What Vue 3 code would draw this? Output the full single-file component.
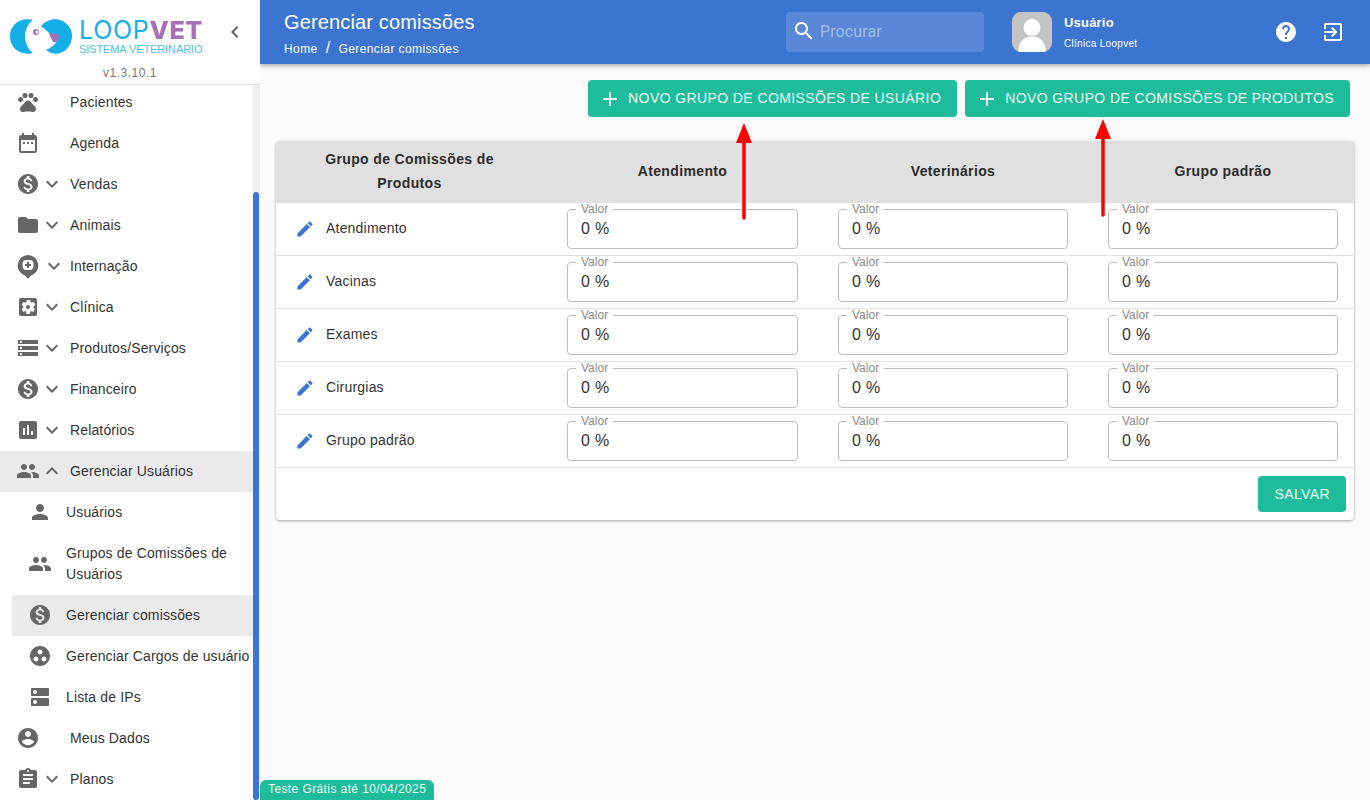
<template>
  <div class="app">
    <aside class="sidebar">
      <div class="brand">
        <div class="brand-row">
          <svg class="logo-mark" width="66" height="40" viewBox="10 17 66 40">
            <path d="M33 20C20 17 10 25 10 36.500S20 56 33 53C29 50 25 44 25 36.500S29 23 33 20Z" fill="#14aee8" />
            <path d="M41 26C46 20 54 18 60 20C68 23 72 29 72 36C72 44 67 51 60 53C55 55 50 53 46 50C51 48 55 45 57 41C54 37 50 34 47 31C45 29 43 28 41 26Z" fill="#14aee8" />
            <path d="M49 34Q55 32 59 35L58 41Q55 43 53 42Q51 38 49 34Z" fill="#a46fb5" />
            <circle cx="36" cy="32" r="3" fill="#a46fb5" />
            <circle cx="37" cy="32" r="1.500" fill="#fff" />
          </svg>
          <div class="wordmark">
            <div class="wordmark-name"><span>LOOP</span><b>VET</b></div>
            <div class="wordmark-sub">SISTEMA VETERINÁRIO</div>
          </div>
          <svg class="collapse" width="24" height="24" viewBox="0 0 24 24"><path :d="icons.chevronLeft" /></svg>
        </div>
        <div class="version">v1.3.10.1</div>
      </div>

      <div class="nav-wrap">
        <ul class="nav">
          <li
            v-for="item in menu"
            :key="item.label"
            class="nav-item"
            :class="{ sub: item.sub, active: item.active, tall: item.tall, open: item.open }"
          >
            <svg class="nav-icon" width="24" height="24" viewBox="0 0 24 24">
              <template v-if="item.icon === 'pets'">
                <circle cx="4.500" cy="9.500" r="2.500" />
                <circle cx="9" cy="5.500" r="2.500" />
                <circle cx="15" cy="5.500" r="2.500" />
                <circle cx="19.500" cy="9.500" r="2.500" />
              </template>
              <template v-if="item.icon === 'pin'">
                <path d="M12 1a10.500 10.500 0 0 0-3 20.500L12 25l3-3.500A10.500 10.500 0 0 0 12 1Z" />
                <rect x="6.500" y="6" width="11" height="10" rx="4" fill="#fff" />
                <path d="M11 8h2v2h2v2h-2v2h-2v-2H9v-2h2Z" />
              </template>
              <path v-else :d="icons[item.icon]" />
            </svg>
            <span v-if="!item.sub" class="chevron-slot" :class="{ shifted: item.icon === 'pin' }">
              <svg v-if="item.chevron" width="24" height="24" viewBox="0 0 24 24">
                <path :d="item.open ? icons.expandLess : icons.expandMore" />
              </svg>
            </span>
            <span class="nav-label">{{ item.label }}</span>
          </li>
        </ul>
        <div class="scroll-thumb"></div>
      </div>
    </aside>

    <div class="main">
      <header class="topbar">
        <div class="page-title">
          <h1>Gerenciar comissões</h1>
          <div class="crumbs">
            <span>Home</span>
            <span class="crumb-sep">/</span>
            <span>Gerenciar comissões</span>
          </div>
        </div>
        <div class="search">
          <svg width="24" height="24" viewBox="0 0 24 24" fill="#fff"><path :d="icons.search" /></svg>
          <span>Procurar</span>
        </div>
        <div class="user">
          <div class="avatar">
            <svg width="40" height="40" viewBox="0 0 40 40" fill="#fff">
              <circle cx="20" cy="15.500" r="8.500" />
              <path d="M6 40C6.500 30 12 24.500 20 24.500S33.500 30 34 40Z" />
            </svg>
          </div>
          <div class="user-text">
            <strong>Usuário</strong>
            <small>Clínica Loopvet</small>
          </div>
        </div>
        <svg class="top-icon help" width="24" height="24" viewBox="0 0 24 24"><path :d="icons.help" /></svg>
        <svg class="top-icon" width="24" height="24" viewBox="0 0 24 24"><path :d="icons.exit" /></svg>
      </header>

      <div class="actions">
        <button class="btn btn-icon">
          <svg width="24" height="24" viewBox="0 0 24 24"><path :d="icons.add" /></svg>
          NOVO GRUPO DE COMISSÕES DE USUÁRIO
        </button>
        <button class="btn btn-icon">
          <svg width="24" height="24" viewBox="0 0 24 24"><path :d="icons.add" /></svg>
          NOVO GRUPO DE COMISSÕES DE PRODUTOS
        </button>
      </div>

      <section class="card">
        <table>
          <colgroup>
            <col class="col-name" />
            <col class="col-a" />
            <col class="col-b" />
            <col class="col-b" />
          </colgroup>
          <thead>
            <tr>
              <th class="th-name">Grupo de Comissões de Produtos</th>
              <th>Atendimento</th>
              <th>Veterinários</th>
              <th>Grupo padrão</th>
            </tr>
          </thead>
          <tbody>
            <tr v-for="row in rows" :key="row">
              <td>
                <div class="row-name">
                  <svg width="24" height="24" viewBox="0 0 24 24" fill="#3b74d1"><path :d="icons.edit" /></svg>
                  <span>{{ row }}</span>
                </div>
              </td>
              <td v-for="n in 3" :key="n" class="td-field">
                <div class="field">
                  <label>Valor</label>
                  <span>0 %</span>
                </div>
              </td>
            </tr>
          </tbody>
        </table>
        <div class="card-foot">
          <button class="btn">SALVAR</button>
        </div>
      </section>
    </div>

    <!-- setas de anotacao por cima da tela -->
    <svg class="arrow arrow-1" width="18" height="97" viewBox="0 0 18 97">
      <path d="M9 18V95" stroke="#f00" stroke-width="3.500" stroke-linecap="round" />
      <path d="M9 0L17 20H1Z" fill="#f00" />
    </svg>
    <svg class="arrow arrow-2" width="18" height="98" viewBox="0 0 18 98">
      <path d="M9 18V96" stroke="#f00" stroke-width="3.500" stroke-linecap="round" />
      <path d="M9 0L17 20H1Z" fill="#f00" />
    </svg>

    <div class="trial">Teste Grátis até 10/04/2025</div>
  </div>
</template>

<script setup>
const icons = {
  pets: 'M17.34 14.86c-.87-1.02-1.6-1.89-2.48-2.91-.46-.54-1.05-1.08-1.75-1.32-.11-.04-.22-.07-.33-.09-.25-.04-.52-.04-.78-.04s-.53 0-.79.05c-.11.02-.22.05-.33.09-.7.24-1.28.78-1.75 1.32-.87 1.02-1.6 1.89-2.48 2.91-1.31 1.31-2.92 2.76-2.62 4.79.29 1.02 1.02 2.03 2.33 2.32.73.15 3.06-.44 5.54-.44h.18c2.48 0 4.81.58 5.54.44 1.31-.29 2.04-1.31 2.33-2.32.31-2.04-1.3-3.49-2.61-4.8z',
  date: 'M9 11H7v2h2v-2zm4 0h-2v2h2v-2zm4 0h-2v2h2v-2zm2-7h-1V2h-2v2H8V2H6v2H5c-1.11 0-1.99.9-1.99 2L3 20c0 1.1.89 2 2 2h14c1.1 0 2-.9 2-2V6c0-1.1-.9-2-2-2zm0 16H5V9h14v11z',
  money: 'M12 2C6.48 2 2 6.48 2 12s4.48 10 10 10 10-4.48 10-10S17.52 2 12 2zm1.41 16.09V20h-2.67v-1.93c-1.71-.36-3.16-1.46-3.27-3.4h1.96c.1 1.05.82 1.87 2.65 1.87 1.96 0 2.4-.98 2.4-1.59 0-.83-.44-1.61-2.67-2.14-2.48-.6-4.18-1.62-4.18-3.67 0-1.72 1.39-2.84 3.11-3.21V4h2.67v1.95c1.86.45 2.79 1.86 2.85 3.39H14.3c-.05-1.11-.64-1.87-2.22-1.87-1.5 0-2.4.68-2.4 1.64 0 .84.65 1.39 2.67 1.91s4.18 1.39 4.18 3.91c-.01 1.83-1.38 2.83-3.12 3.16z',
  folder: 'M10 4H4c-1.1 0-1.99.9-1.99 2L2 18c0 1.1.9 2 2 2h16c1.1 0 2-.9 2-2V8c0-1.1-.9-2-2-2h-8l-2-2z',
  settings: 'M12 10c-1.1 0-2 .9-2 2s.9 2 2 2 2-.9 2-2-.9-2-2-2zm7-7H5c-1.11 0-2 .9-2 2v14c0 1.1.89 2 2 2h14c1.11 0 2-.9 2-2V5c0-1.1-.89-2-2-2zm-1.75 9c0 .23-.02.46-.05.68l1.48 1.16c.13.11.17.3.08.45l-1.4 2.42c-.09.15-.27.21-.43.15l-1.74-.7c-.36.28-.76.51-1.18.69l-.26 1.85c-.03.17-.18.3-.35.3h-2.8c-.17 0-.32-.13-.35-.3L10.5 16.8c-.43-.18-.82-.41-1.18-.69l-1.74.7c-.16.06-.34 0-.43-.15l-1.4-2.42c-.09-.15-.05-.34.08-.45l1.48-1.16c-.03-.22-.05-.45-.05-.68 0-.23.02-.46.05-.68l-1.48-1.16c-.13-.11-.17-.3-.08-.45l1.4-2.42c.09-.15.27-.21.43-.15l1.74.7c.36-.28.76-.51 1.18-.69l.26-1.85c.03-.17.18-.3.35-.3h2.8c.17 0 .32.13.35.3l.26 1.85c.43.18.82.41 1.18.69l1.74-.7c.16-.06.34 0 .43.15l1.4 2.42c.09.15.05.34-.08.45l-1.48 1.16c.03.22.05.45.05.68z',
  storage: 'M2 20h20v-4H2v4zm2-3h2v2H4v-2zM2 4v4h20V4H2zm4 3H4V5h2v2zm-4 7h20v-4H2v4zm2-3h2v2H4v-2z',
  chart: 'M19 3H5c-1.1 0-2 .9-2 2v14c0 1.1.9 2 2 2h14c1.1 0 2-.9 2-2V5c0-1.1-.9-2-2-2zM9 17H7v-7h2v7zm4 0h-2V7h2v10zm4 0h-2v-4h2v4z',
  people: 'M16 11c1.66 0 2.99-1.34 2.99-3S17.66 5 16 5c-1.66 0-3 1.34-3 3s1.34 3 3 3zm-8 0c1.66 0 2.99-1.34 2.99-3S9.66 5 8 5C6.34 5 5 6.34 5 8s1.34 3 3 3zm0 2c-2.33 0-7 1.17-7 3.500V19h14v-2.500c0-2.330-4.670-3.500-7-3.500zm8 0c-.29 0-.62.02-.97.05 1.16.84 1.97 1.970 1.970 3.450V19h6v-2.500c0-2.330-4.670-3.500-7-3.500z',
  person: 'M12 12c2.210 0 4-1.790 4-4s-1.790-4-4-4-4 1.790-4 4 1.790 4 4 4zm0 2c-2.670 0-8 1.340-8 4v2h16v-2c0-2.660-5.330-4-8-4z',
  group: 'M12 2C6.480 2 2 6.480 2 12s4.480 10 10 10 10-4.480 10-10S17.520 2 12 2zM8 17.500c-1.380 0-2.500-1.120-2.500-2.500s1.120-2.500 2.500-2.500 2.500 1.120 2.500 2.500-1.120 2.500-2.500 2.500zM9.500 8c0-1.380 1.120-2.500 2.500-2.500s2.500 1.120 2.500 2.500-1.120 2.500-2.500 2.500S9.500 9.380 9.500 8zm6.500 9.500c-1.380 0-2.500-1.120-2.500-2.500s1.120-2.500 2.500-2.500 2.500 1.120 2.500 2.500-1.120 2.500-2.500 2.500z',
  dns: 'M20 13H4c-.55 0-1 .45-1 1v6c0 .55.45 1 1 1h16c.55 0 1-.45 1-1v-6c0-.55-.45-1-1-1zM7 19c-1.100 0-2-.9-2-2s.9-2 2-2 2 .9 2 2-.9 2-2 2zM20 3H4c-.55 0-1 .45-1 1v6c0 .55.45 1 1 1h16c.55 0 1-.45 1-1V4c0-.55-.45-1-1-1zM7 9c-1.100 0-2-.9-2-2s.9-2 2-2 2 .9 2 2-.9 2-2 2z',
  account: 'M12 2C6.480 2 2 6.480 2 12s4.480 10 10 10 10-4.480 10-10S17.520 2 12 2zm0 3c1.660 0 3 1.340 3 3s-1.340 3-3 3-3-1.340-3-3 1.340-3 3-3zm0 14.200c-2.500 0-4.710-1.280-6-3.220.03-1.990 4-3.080 6-3.080 1.990 0 5.970 1.090 6 3.080-1.290 1.940-3.500 3.220-6 3.220z',
  assignment: 'M19 3h-4.180C14.400 1.840 13.300 1 12 1c-1.300 0-2.400.84-2.820 2H5c-1.100 0-2 .9-2 2v14c0 1.100.9 2 2 2h14c1.100 0 2-.9 2-2V5c0-1.100-.9-2-2-2zm-7 0c.55 0 1 .45 1 1s-.45 1-1 1-1-.45-1-1 .45-1 1-1zm2 14H7v-2h7v2zm3-4H7v-2h10v2zm0-4H7V7h10v2z',
  expandMore: 'M16.590 8.590L12 13.170 7.410 8.590 6 10l6 6 6-6z',
  expandLess: 'M12 8l-6 6 1.410 1.410L12 10.830l4.590 4.580L18 14z',
  chevronLeft: 'M15.410 7.410L14 6l-6 6 6 6 1.410-1.410L10.830 12z',
  edit: 'M3 17.250V21h3.750L17.810 9.940l-3.750-3.750L3 17.250zM20.710 7.040c.39-.39.39-1.020 0-1.410l-2.340-2.340c-.39-.39-1.020-.39-1.410 0l-1.830 1.830 3.750 3.750 1.830-1.830z',
  search: 'M15.500 14h-.79l-.28-.27C15.410 12.590 16 11.110 16 9.500 16 5.910 13.090 3 9.500 3S3 5.910 3 9.500 5.910 16 9.500 16c1.610 0 3.090-.59 4.230-1.570l.27.28v.79l5 4.990L20.490 19l-4.990-5zm-6 0C7.010 14 5 11.990 5 9.500S7.010 5 9.500 5 14 7.010 14 9.500 11.990 14 9.500 14z',
  help: 'M12 2C6.480 2 2 6.480 2 12s4.480 10 10 10 10-4.480 10-10S17.520 2 12 2zm1 17h-2v-2h2v2zm2.070-7.750l-.9.92C13.450 12.900 13 13.500 13 15h-2v-.5c0-1.100.45-2.100 1.170-2.830l1.240-1.260c.37-.36.59-.86.59-1.410 0-1.100-.9-2-2-2s-2 .9-2 2H8c0-2.210 1.790-4 4-4s4 1.790 4 4c0 .88-.36 1.680-.93 2.250z',
  exit: 'M10.090 15.590L11.500 17l5-5-5-5-1.410 1.410L12.670 11H3v2h9.670l-2.580 2.590zM19 3H5c-1.110 0-2 .9-2 2v4h2V5h14v14H5v-4H3v4c0 1.100.89 2 2 2h14c1.100 0 2-.9 2-2V5c0-1.100-.9-2-2-2z',
  add: 'M19 13h-6v6h-2v-6H5v-2h6V5h2v6h6v2z'
}

const menu = [
  { label: 'Pacientes', icon: 'pets' },
  { label: 'Agenda', icon: 'date' },
  { label: 'Vendas', icon: 'money', chevron: true },
  { label: 'Animais', icon: 'folder', chevron: true },
  { label: 'Internação', icon: 'pin', chevron: true },
  { label: 'Clínica', icon: 'settings', chevron: true },
  { label: 'Produtos/Serviços', icon: 'storage', chevron: true },
  { label: 'Financeiro', icon: 'money', chevron: true },
  { label: 'Relatórios', icon: 'chart', chevron: true },
  { label: 'Gerenciar Usuários', icon: 'people', chevron: true, open: true },
  { label: 'Usuários', icon: 'person', sub: true },
  { label: 'Grupos de Comissões de Usuários', icon: 'people', sub: true, tall: true },
  { label: 'Gerenciar comissões', icon: 'money', sub: true, active: true },
  { label: 'Gerenciar Cargos de usuário', icon: 'group', sub: true },
  { label: 'Lista de IPs', icon: 'dns', sub: true },
  { label: 'Meus Dados', icon: 'account' },
  { label: 'Planos', icon: 'assignment', chevron: true }
]

const rows = ['Atendimento', 'Vacinas', 'Exames', 'Cirurgias', 'Grupo padrão']
</script>

<style>
html,
body {
  margin: 0;
  height: 100%;
  overflow: hidden;
  background: #fafafa;
}
</style>

<style scoped>
.app {
  position: relative;
  display: flex;
  width: 1370px;
  height: 800px;
  overflow: hidden;
  background: #fafafa;
  font-family: "Liberation Sans", Arial, sans-serif;
  color: #333;
}

/* sidebar */
.sidebar {
  display: flex;
  flex-direction: column;
  width: 260px;
  flex-shrink: 0;
  background: #fff;
}

.brand {
  position: relative;
  z-index: 1;
  height: 85px;
  box-sizing: border-box;
  border-bottom: 1px solid #e0e0e0;
  background: #fff;
}

.brand-row {
  display: flex;
  align-items: flex-start;
  height: 64px;
  padding-top: 17px;
  padding-left: 10px;
  box-sizing: border-box;
}

.logo-mark {
  flex-shrink: 0;
}

.wordmark {
  margin-left: 3px;
  width: 125px;
}

.wordmark-name {
  font-family: Inter, "Liberation Sans", sans-serif;
  font-size: 25px;
  line-height: 26px;
  height: 26px;
  color: #14aee8;
  white-space: nowrap;
  letter-spacing: 0.7px;
}

.wordmark-name b {
  color: #a46fb5;
  font-weight: 800;
}

.wordmark-sub {
  font-size: 11px;
  line-height: 13px;
  color: #4cc0ea;
  white-space: nowrap;
  letter-spacing: -0.1px;
}

.collapse {
  margin-left: 19px;
  margin-top: 3px;
  fill: #616161;
}

.version {
  text-align: center;
  font-size: 12px;
  letter-spacing: 0.5px;
  line-height: 16px;
  color: #777;
  margin-top: 1px;
}

.nav-wrap {
  position: relative;
  flex: 1;
  overflow: hidden;
  background: linear-gradient(to right, #fff 253px, #eee 253px);
}

.nav {
  list-style: none;
  margin: -3px 7px 0 0;
  padding: 0;
}

.nav-item {
  display: flex;
  align-items: center;
  height: 41px;
  box-sizing: border-box;
  padding: 0 0 2px 16px;
  font-size: 14px;
  letter-spacing: 0.14px;
  color: #333;
}

.nav-item.open {
  background: #eaeaea;
}

.nav-item.sub {
  margin-left: 12px;
  padding-left: 16px;
}

.nav-item.tall {
  height: 62px;
  padding-bottom: 0;
  line-height: 21px;
}

.nav-item.active {
  background: #eaeaea;
}

.nav-icon {
  flex-shrink: 0;
  fill: #666;
  overflow: visible;
}

.chevron-slot {
  display: flex;
  width: 24px;
  height: 24px;
  margin-right: 6px;
  fill: #666;
}

.chevron-slot.shifted {
  transform: translateX(2px);
}

.nav-item.sub .nav-label {
  margin-left: 14px;
  white-space: normal;
}

.nav-label {
  white-space: nowrap;
}

.scroll-thumb {
  position: absolute;
  left: 253px;
  top: 107px;
  bottom: 0;
  width: 6px;
  border-radius: 3px;
  background: #3b74d1;
}

/* conteudo */
.main {
  flex: 1;
  display: flex;
  flex-direction: column;
  min-width: 0;
}

.topbar {
  display: flex;
  align-items: center;
  height: 64px;
  flex-shrink: 0;
  padding-left: 24px;
  background: #3b74d1;
  color: #fff;
  box-shadow: 0 2px 4px rgba(0, 0, 0, 0.3);
}

.page-title {
  width: 502px;
  flex-shrink: 0;
}

.page-title h1 {
  margin: 0;
  font-size: 20px;
  font-weight: 400;
  line-height: 24px;
  letter-spacing: 0.15px;
}

.crumbs {
  display: flex;
  align-items: center;
  gap: 6px;
  margin-top: 7px;
  margin-bottom: -3px;
  font-size: 12px;
  line-height: 16px;
  letter-spacing: 0.4px;
}

.crumb-sep {
  font-size: 16px;
  margin: -3px 2px 0 2px;
}

.search {
  display: flex;
  align-items: center;
  gap: 4px;
  width: 198px;
  height: 40px;
  padding: 0 0 2px 6px;
  box-sizing: border-box;
  border-radius: 4px;
  background: rgba(255, 255, 255, 0.15);
  font-family: Roboto, sans-serif;
  font-size: 16px;
  letter-spacing: 0.1px;
  color: rgba(255, 255, 255, 0.45);
}

.user {
  display: flex;
  align-items: center;
  gap: 12px;
  margin-left: 28px;
  width: 262px;
}

.avatar {
  width: 40px;
  height: 40px;
  border-radius: 9px;
  background: #c4c4c4;
  overflow: hidden;
}

.avatar svg {
  display: block;
}

.user-text {
  display: flex;
  flex-direction: column;
  gap: 6px;
}

.user-text strong {
  font-size: 13px;
  line-height: 16px;
  letter-spacing: 0.2px;
}

.user-text small {
  font-size: 10px;
  line-height: 13px;
  letter-spacing: 0.3px;
}

.top-icon {
  fill: #fff;
  margin-left: 23px;
}

.top-icon.help {
  margin-left: 0;
}

.actions {
  display: flex;
  justify-content: flex-end;
  gap: 8px;
  padding: 16px 20px 0 0;
}

.btn {
  display: inline-flex;
  align-items: center;
  height: 36px;
  padding: 0 16px;
  border: 0;
  border-radius: 4px;
  background: #1ebc9a;
  color: #e8fbf6;
  font-family: inherit;
  font-size: 14px;
  letter-spacing: 0.4px;
}

.btn-icon {
  height: 37px;
  padding: 0 16px 2px 10px;
}

.btn-icon svg {
  fill: currentColor;
  margin-right: 6px;
  margin-top: 2px;
  width: 24px;
  height: 24px;
}

.card {
  margin: 24px 16px 0;
  background: #fff;
  border-radius: 4px;
  box-shadow: 0 1px 3px rgba(0, 0, 0, 0.35);
  overflow: hidden;
}

table {
  width: 100%;
  table-layout: fixed;
  border-collapse: collapse;
}

.col-name {
  width: 267px;
}

.col-a {
  width: 271px;
}

.col-b {
  width: 270px;
}

th {
  height: 62px;
  padding: 0 16px 2px 24px;
  box-sizing: border-box;
  background: #e0e0e0;
  font-size: 14px;
  font-weight: 700;
  line-height: 24px;
  letter-spacing: 0.36px;
  color: #2b2b2b;
}

th.th-name {
  padding: 0 16px 2px;
}

td {
  height: 52px;
  padding: 0;
  border-bottom: 1px solid #e0e0e0;
}

.td-field {
  padding: 0 16px 0 24px;
}

.row-name {
  display: flex;
  align-items: center;
  gap: 9px;
  padding: 0 0 2px 17px;
  font-size: 14px;
  letter-spacing: 0.2px;
  color: #333;
}

.row-name svg {
  width: 24px;
  height: 24px;
  margin-top: 2px;
  transform: scale(0.84);
}

.field {
  position: relative;
  display: flex;
  align-items: center;
  height: 40px;
  padding-left: 13px;
  box-sizing: border-box;
  border: 1px solid #bdbdbd;
  border-radius: 4px;
  font-size: 16px;
  letter-spacing: 0.3px;
  color: #333;
}

.field label {
  position: absolute;
  left: 8px;
  top: -7px;
  padding: 0 5px;
  background: #fff;
  font-size: 12px;
  line-height: 13px;
  letter-spacing: 0;
  color: #8a8a8a;
}

.card-foot {
  display: flex;
  justify-content: flex-end;
  padding: 8px 8px 8px 0;
}

.arrow {
  position: absolute;
}

.arrow-1 {
  left: 735px;
  top: 123px;
}

.arrow-2 {
  left: 1094px;
  top: 119px;
}

.trial {
  position: absolute;
  left: 260px;
  bottom: 0;
  height: 20px;
  padding: 0 8px;
  border-radius: 6px 6px 0 0;
  background: #1ebc9a;
  color: #e8fbf6;
  font-size: 12px;
  line-height: 18px;
  letter-spacing: 0.4px;
}
</style>
